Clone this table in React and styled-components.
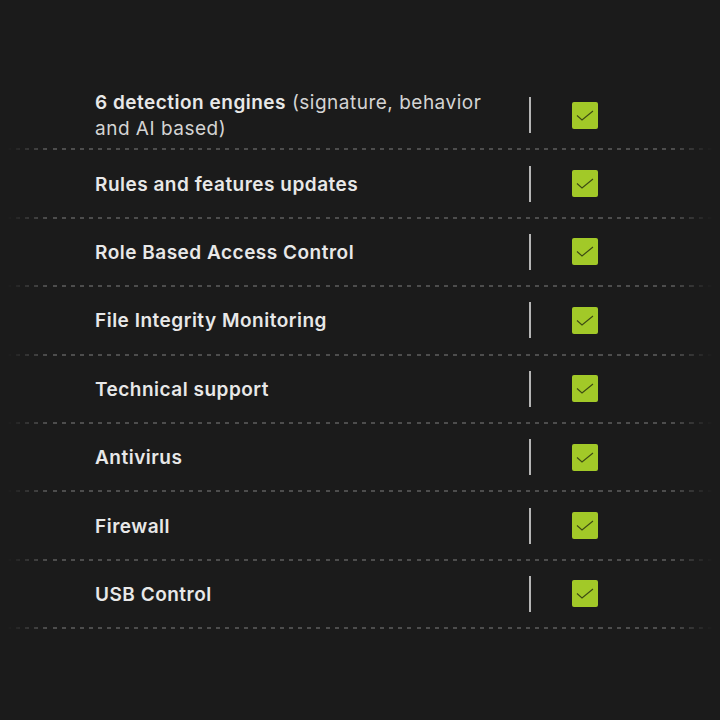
import React from 'react';
import styled, { createGlobalStyle } from 'styled-components';

const GlobalStyle = createGlobalStyle`
  html, body {
    margin: 0;
    padding: 0;
    background: #1b1b1b;
  }
  body {
    font-family: "Inter", "Liberation Sans", sans-serif;
  }
`

const Page = styled.div`
  width: 720px;
  height: 720px;
  background: #1b1b1b;
  padding-top: 82px;
  box-sizing: border-box;
`

const Row = styled.div`
  display: grid;
  grid-template-columns: 1fr 2px 67px;
  align-items: center;
  height: 66.4px;
  padding-left: 95px;
  padding-right: 122px;
`

const Label = styled.div`
  max-width: 392px;
  font-size: 19px;
  line-height: 26px;
  color: #e8e8e8;
  font-weight: 600;
  letter-spacing: 0.5px;
  padding-top: 2px;
`

const Light = styled.span`
  font-weight: 400;
  color: #d4d4d4;
`

const Divider = styled.div`
  width: 2px;
  height: 36px;
  background: #b5b5b5;
`

const Check = styled.div`
  justify-self: end;
  width: 26px;
  height: 27px;
  border-radius: 2px;
  background: #a2c928;
  display: flex;
  align-items: center;
  justify-content: center;
`

const Dashes = styled.div`
  height: 2px;
  margin: 0 7px;
  background: repeating-linear-gradient(90deg, #4d4d4d 0 4px, transparent 4px 9.1px);
  mask-image: linear-gradient(90deg, transparent 0, #000 40px, #000 calc(100% - 40px), transparent 100%);
`

const rows = [
  { bold: '6 detection engines', rest: ' (signature, behavior and AI based)' },
  { bold: 'Rules and features updates' },
  { bold: 'Role Based Access Control' },
  { bold: 'File Integrity Monitoring' },
  { bold: 'Technical support' },
  { bold: 'Antivirus' },
  { bold: 'Firewall' },
  { bold: 'USB Control' },
]

const Tick = () => (
  <svg width="18" height="13" viewBox="0 0 18 13">
    <path d="M1 6.5 L6 11 L17 2" fill="none" stroke="#3d4a14" strokeWidth="1.1" />
  </svg>
)

const App = () => (
  <>
    <GlobalStyle />
    <Page>
      {rows.map(r => (
        <React.Fragment key={r.bold}>
          <Row>
            <Label>
              {r.bold}
              {r.rest && <Light>{r.rest}</Light>}
            </Label>
            <Divider />
            <Check><Tick /></Check>
          </Row>
          <Dashes />
        </React.Fragment>
      ))}
    </Page>
  </>
)

export default App;
